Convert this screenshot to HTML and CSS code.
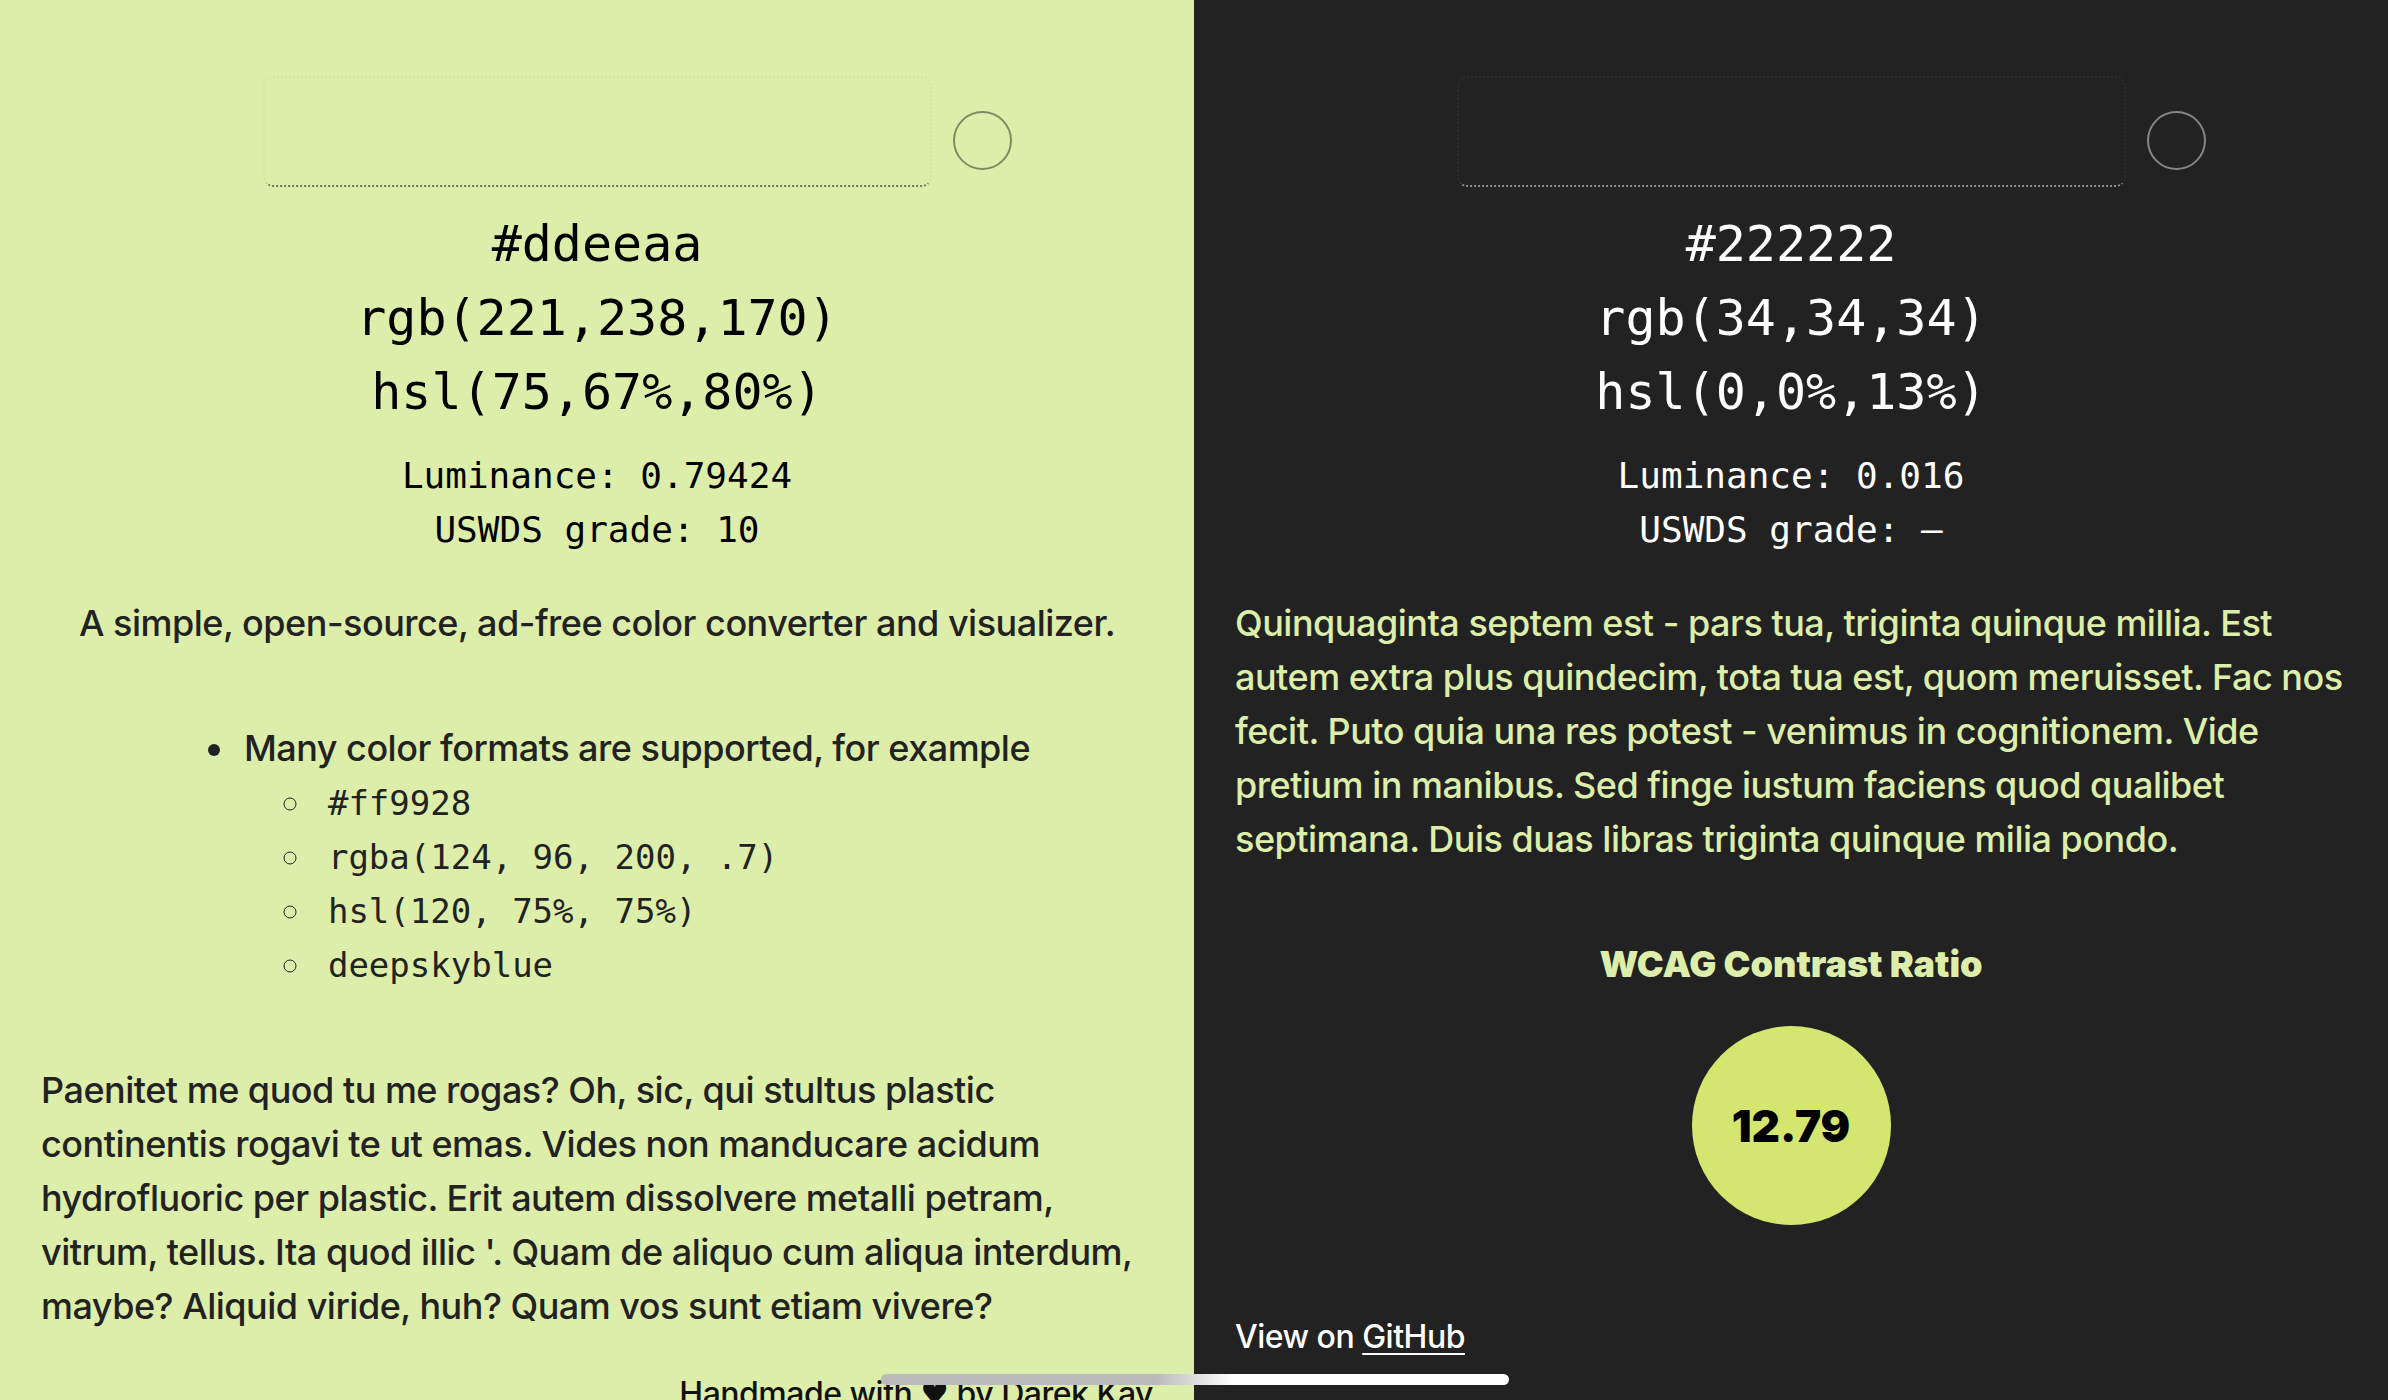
FILE: index.html
```html
<!DOCTYPE html>
<html lang="en">
<head>
<meta charset="utf-8">
<title>Color converter</title>
<link rel="stylesheet" href="styles.css">
</head>
<body>
<main class="split">
  <section class="panel panel-light">
    <div class="picker">
      <div class="picker-field"></div>
      <span class="picker-swatch"></span>
    </div>
    <div class="values">
      <div>#ddeeaa</div>
      <div>rgb(221,238,170)</div>
      <div>hsl(75,67%,80%)</div>
    </div>
    <div class="meta">
      <div>Luminance: 0.79424</div>
      <div>USWDS grade: 10</div>
    </div>
    <p class="intro">A simple, open-source, ad-free color converter and visualizer.</p>
    <div class="list-wrap">
      <ul class="formats">
        <li>Many color formats are supported, for example
          <ul class="examples">
            <li><code>#ff9928</code></li>
            <li><code>rgba(124, 96, 200, .7)</code></li>
            <li><code>hsl(120, 75%, 75%)</code></li>
            <li><code>deepskyblue</code></li>
          </ul>
        </li>
      </ul>
    </div>
    <p class="body-text">Paenitet me quod tu me rogas? Oh, sic, qui stultus plastic continentis rogavi te ut emas. Vides non manducare acidum hydrofluoric per plastic. Erit autem dissolvere metalli petram, vitrum, tellus. Ita quod illic '. Quam de aliquo cum aliqua interdum, maybe? Aliquid viride, huh? Quam vos sunt etiam vivere?</p>
    <footer class="credit">Handmade with <span class="heart">♥</span> by Darek Kay</footer>
  </section>
  <section class="panel panel-dark">
    <div class="picker">
      <div class="picker-field"></div>
      <span class="picker-swatch"></span>
    </div>
    <div class="values">
      <div>#222222</div>
      <div>rgb(34,34,34)</div>
      <div>hsl(0,0%,13%)</div>
    </div>
    <div class="meta">
      <div>Luminance: 0.016</div>
      <div>USWDS grade: –</div>
    </div>
    <p class="body-text body-first">Quinquaginta septem est - pars tua, triginta quinque millia. Est autem extra plus quindecim, tota tua est, quom meruisset. Fac nos fecit. Puto quia una res potest - venimus in cognitionem. Vide pretium in manibus. Sed finge iustum faciens quod qualibet septimana. Duis duas libras triginta quinque milia pondo.</p>
    <h2 class="ratio-title">WCAG Contrast Ratio</h2>
    <div class="ratio">12.79</div>
    <p class="github">View on <a href="#">GitHub</a></p>
  </section>
</main>
<div class="home-indicator"></div>
</body>
</html>
```

FILE: styles.css
```css
html, body {
  margin: 0;
  padding: 0;
  height: 1400px;
  overflow: hidden;
}

body {
  font-family: "Inter", "Noto Sans", sans-serif;
  font-size: 36px;
  line-height: 54px;
  letter-spacing: -0.5px;
}

.split {
  display: grid;
  grid-template-columns: 1194px 1194px;
  height: 1400px;
}

.panel {
  padding: 0 41px;
  display: flex;
  flex-direction: column;
  overflow: hidden;
}

.panel-light {
  background: #ddeeaa;
  color: #222222;
}

.panel-dark {
  background: #222222;
  color: #ddeeaa;
}

.picker {
  margin-top: 76px;
  display: grid;
  grid-template-columns: 1fr 669px 1fr;
}

.picker-field {
  grid-column: 2;
  height: 111px;
  box-sizing: border-box;
  border: 2px dotted rgba(0, 0, 0, 0.04);
  border-bottom-color: rgba(0, 0, 0, 0.5);
  border-radius: 10px;
}

.panel-dark .picker-field {
  border-color: rgba(255, 255, 255, 0.05);
  border-bottom-color: rgba(255, 255, 255, 0.5);
}

.picker-swatch {
  grid-column: 3;
  align-self: start;
  justify-self: start;
  width: 59px;
  height: 59px;
  box-sizing: border-box;
  margin: 35px 0 0 21px;
  border-radius: 50%;
  border: 2.5px solid rgba(0, 0, 0, 0.42);
}

.panel-dark .picker-swatch {
  border-color: rgba(255, 255, 255, 0.45);
}

.values {
  margin-top: 20px;
  text-align: center;
  font-family: "DejaVu Sans Mono", monospace;
  font-size: 50px;
  line-height: 74px;
  letter-spacing: 0;
  color: #000;
}

.meta {
  margin-top: 20px;
  text-align: center;
  font-family: "DejaVu Sans Mono", monospace;
  font-size: 36px;
  line-height: 54px;
  letter-spacing: 0;
  color: #000;
}

.panel-dark .values,
.panel-dark .meta {
  color: #fff;
}

.intro {
  margin: 39px 0 0;
  text-align: center;
  font-weight: 500;
}

.list-wrap {
  margin-top: 71px;
  text-align: center;
}

.formats {
  display: inline-block;
  text-align: left;
  margin: 0;
  padding-left: 74px;
  font-weight: 500;
  list-style: disc;
}

.formats > li {
  padding-left: 6px;
}

.examples {
  margin: 0;
  padding-left: 70px;
  list-style: circle;
}

.examples > li {
  padding-left: 14px;
}

.examples code {
  font-family: "DejaVu Sans Mono", monospace;
  font-size: 34px;
  line-height: 40px;
  letter-spacing: 0;
  font-weight: 400;
}

.body-text {
  margin: 72px 0 0;
  font-weight: 500;
}

.body-first {
  margin-top: 39px;
}

.credit {
  margin-top: 34px;
  text-align: right;
  color: #111;
  font-size: 32px;
  font-weight: 500;
}

.heart {
  font-family: "DejaVu Sans", sans-serif;
}

.ratio-title {
  margin: 71px 0 0;
  text-align: center;
  font-size: 36px;
  line-height: 54px;
  font-weight: 900;
  letter-spacing: 0;
}

.ratio {
  margin: 35px auto 0;
  width: 199px;
  height: 199px;
  border-radius: 50%;
  background: #d4e66f;
  color: #000;
  display: grid;
  place-items: center;
  font-size: 44px;
  font-weight: 900;
  letter-spacing: 0;
}

.github {
  margin: 85px 0 0;
  color: #fff;
  font-size: 32px;
  font-weight: 500;
}

.github a {
  color: #fff;
  text-decoration: underline;
  text-underline-offset: 5px;
  text-decoration-thickness: 2px;
}

.home-indicator {
  position: fixed;
  left: 881px;
  top: 1374px;
  width: 628px;
  height: 11px;
  border-radius: 6px;
  background: linear-gradient(to right, #bbbbbb 0%, #bbbbbb 44%, #ffffff 56%, #ffffff 100%);
}
```
